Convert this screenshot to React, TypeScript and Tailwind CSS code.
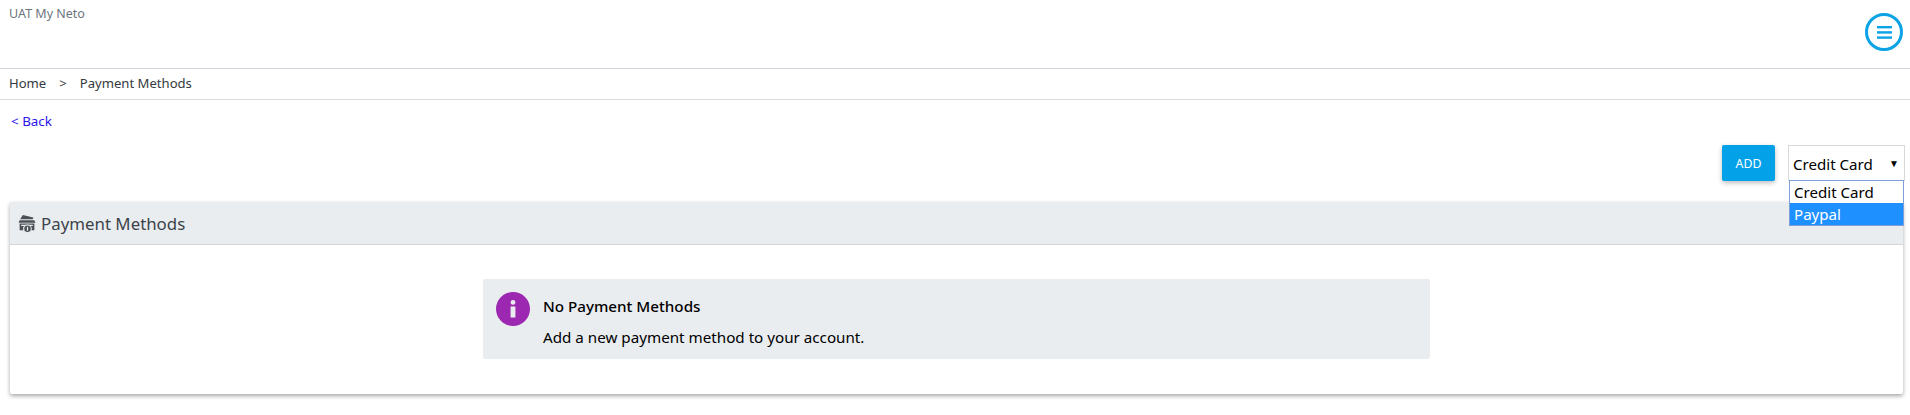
function CardIcon() {
  return (
    <svg className="w-[20px] h-[19px] mr-[4px] text-[#4a5056]" viewBox="0 0 19 18" fill="currentColor">
      <path d="M5.5 1 L15.5 3.2 L15 5 L3 5 Z" />
      <path d="M2.5 6 H16.5 L17.5 8.2 H1.5 Z" />
      <path d="M2.5 9 H16.5 V15.5 H13 V12 H6 V15.5 H2.5 Z" />
      <rect x="4" y="10.2" width="11" height="1.2" fill="#eaedf0" />
      <circle cx="10" cy="14" r="3.6" stroke="#eaedf0" strokeWidth="1" />
      <rect x="9.4" y="12.2" width="1.2" height="3.6" fill="#eaedf0" />
    </svg>
  );
}

export default function App() {
  return (
    <div className="min-h-[415px] bg-white font-['Noto_Sans',sans-serif] text-[#212529]">
      <header className="h-[69px] border-b border-[#d0d5dc] flex justify-between pl-[9px] pr-[7px]">
        <span className="text-[12.5px] leading-[16px] mt-[6px] text-[#6c757d]">UAT My Neto</span>
        <button className="w-[38px] h-[38px] mt-[13px] rounded-full border-[3px] border-[#0ba2e6] flex items-center justify-center">
          <svg className="w-[15px] h-[13px]" viewBox="0 0 15 13" fill="#0ba2e6">
            <rect y="0" width="15" height="2.4" />
            <rect y="5.2" width="15" height="2.4" />
            <rect y="10.4" width="15" height="2.4" />
          </svg>
        </button>
      </header>
      <nav className="h-[31px] border-b border-[#d8dce0] flex items-center pl-[9px] text-[13.1px] text-[#343a40]">
        <span>Home</span>
        <span className="mx-[13px]">&gt;</span>
        <span>Payment Methods</span>
      </nav>
      <div className="pl-[11px] pt-[12px] text-[13.4px] leading-[18px] text-[#2a13e8]">&lt; Back</div>
      <div className="flex justify-end gap-[13px] pr-[5px] mt-[15px]">
        <button className="w-[53px] h-[36px] pt-[2px] rounded-[2px] bg-[#03a1e8] text-white text-[12.3px] shadow-[0_2px_5px_rgba(0,0,0,0.26)]">ADD</button>
        <div className="relative w-[117px] h-[36px] border border-[#d6d9dc] bg-white flex items-center justify-between pt-[2px] pl-[4px] pr-[4px] text-[15.1px] text-black">
          <span>Credit Card</span>
          <span className="text-[10px] mr-[1px] mb-[2px]">▼</span>
          <div className="absolute left-0 top-[34px] w-[115px] border border-[#7f9ed8] bg-white text-[15.1px] leading-[22px] z-10">
            <div className="pl-[4px]">Credit Card</div>
            <div className="pl-[4px] bg-[#1e90ff] text-white">Paypal</div>
          </div>
        </div>
      </div>
      <section className="ml-[10px] mr-[7px] mt-[21px] h-[192px] bg-white rounded-[2px] shadow-[0_2px_4px_rgba(0,0,0,0.35)]">
        <div className="h-[43px] bg-[#eaedf0] border-b border-[#d3d7db] flex items-center pl-[7px] pt-[1px] text-[16.85px] text-[#3c434a]">
          <CardIcon />
          <span>Payment Methods</span>
        </div>
        <div className="flex justify-center pt-[34px]">
          <div className="w-[947px] h-[80px] bg-[#eaedf0] rounded-[2px] flex pl-[13px] pt-[13px]">
            <div className="w-[34px] h-[34px] rounded-full bg-[#9c27b0] flex items-center justify-center">
              <svg className="w-[6px] h-[18px]" viewBox="0 0 6 18" fill="#eaedf0">
                <circle cx="3" cy="2.4" r="2.4" />
                <rect x="0.6" y="6.5" width="4.8" height="11" />
              </svg>
            </div>
            <div className="ml-[13px] text-[15.2px] text-black">
              <div className="font-medium leading-[20px] mt-[4px]">No Payment Methods</div>
              <div className="leading-[20px] mt-[11px]">Add a new payment method to your account.</div>
            </div>
          </div>
        </div>
      </section>
    </div>
  );
}
